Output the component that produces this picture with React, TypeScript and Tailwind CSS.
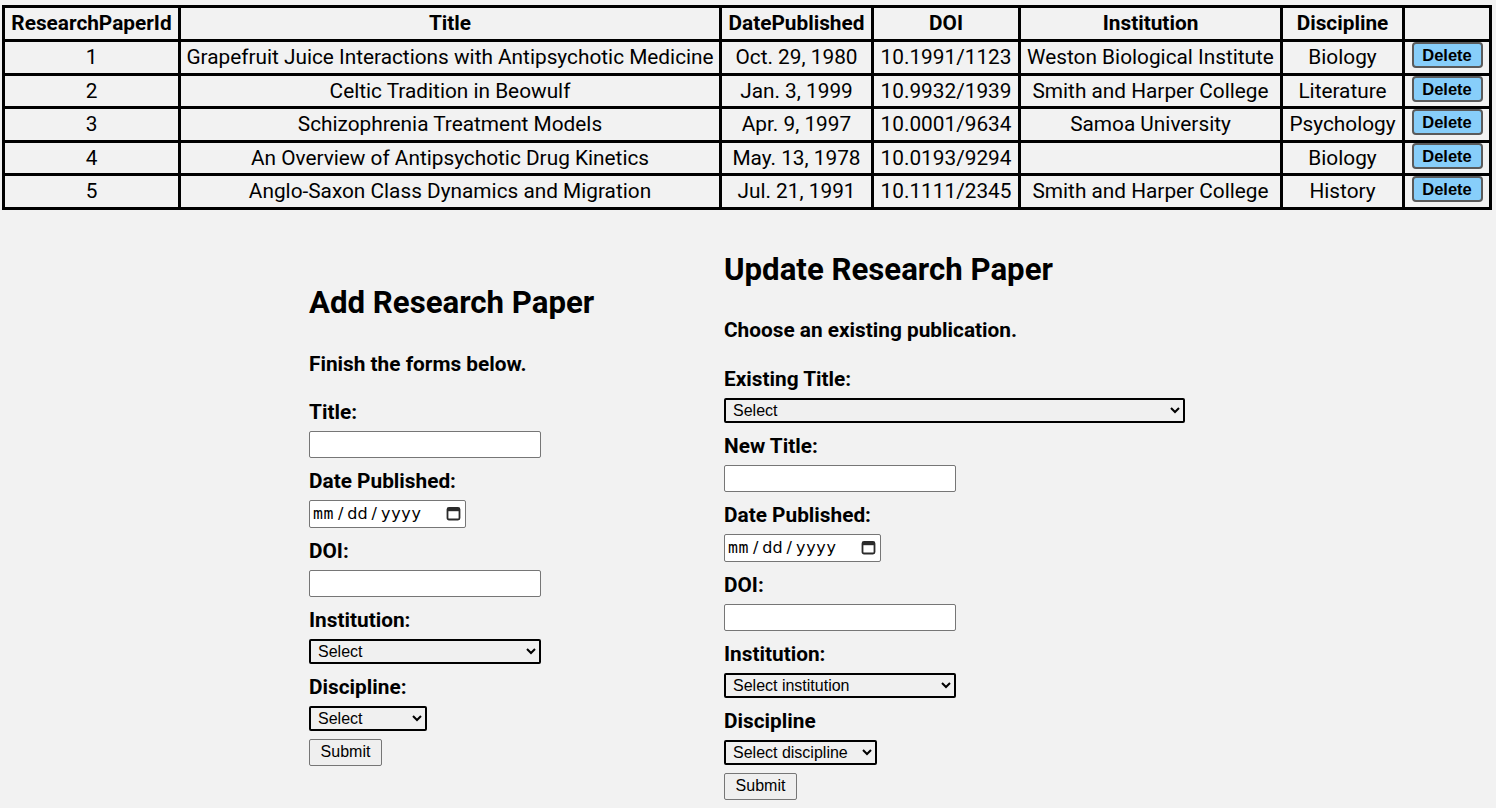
import React from "react";

const rows = [
  { id: 1, title: "Grapefruit Juice Interactions with Antipsychotic Medicine", date: "Oct. 29, 1980", doi: "10.1991/1123", inst: "Weston Biological Institute", disc: "Biology" },
  { id: 2, title: "Celtic Tradition in Beowulf", date: "Jan. 3, 1999", doi: "10.9932/1939", inst: "Smith and Harper College", disc: "Literature" },
  { id: 3, title: "Schizophrenia Treatment Models", date: "Apr. 9, 1997", doi: "10.0001/9634", inst: "Samoa University", disc: "Psychology" },
  { id: 4, title: "An Overview of Antipsychotic Drug Kinetics", date: "May. 13, 1978", doi: "10.0193/9294", inst: "", disc: "Biology" },
  { id: 5, title: "Anglo-Saxon Class Dynamics and Migration", date: "Jul. 21, 1991", doi: "10.1111/2345", inst: "Smith and Harper College", disc: "History" },
];

const th = "border-[3px] border-black px-[4px] py-[4px] leading-[23px] font-bold text-center";
const td = "border-[3px] border-black px-[4px] py-[4px] leading-[22.5px] text-center";

const labelCls = "block text-[20.8px] leading-[24px] font-bold mb-[7px]";
const textInput = "block h-[27px] bg-white border border-[#767676] rounded-[2px] mb-[11px] px-[2px]";
const selectCls = "block h-[25px] bg-[#f0f0f0] border-2 border-black rounded-[2px] font-['Liberation_Sans',sans-serif] text-[16px] leading-[19px] text-black pl-[3px]";
const submitCls = "block h-[27px] w-[73px] bg-[#efefef] border border-[#767676] rounded-[2px] font-['Liberation_Sans',sans-serif] text-[16px] text-black";

function CalendarIcon() {
  return (
    <svg width="15" height="15" viewBox="0 0 15 15" aria-hidden="true">
      <rect x="1.5" y="2" width="12" height="11.5" rx="1.5" fill="none" stroke="#2b2b2b" strokeWidth="1.8" />
      <rect x="1.5" y="2" width="12" height="3.2" fill="#2b2b2b" />
    </svg>
  );
}

function DateField() {
  return (
    <div
      role="textbox"
      tabIndex={0}
      className="flex items-center h-[28px] w-[157px] bg-white border border-[#767676] rounded-[2px] mb-[11px] pl-[3px] pr-[4px] text-black"
    >
      <div className="flex items-center gap-[4px] text-[16px] leading-[20px] font-['DejaVu_Sans',sans-serif]">
        <span className="font-['DejaVu_Sans_Mono',monospace] text-[16.5px] tracking-[0.5px]">mm</span>
        <span>/</span>
        <span>dd</span>
        <span>/</span>
        <span className="tracking-[0.7px]">yyyy</span>
      </div>
      <div className="ml-auto flex items-center">
        <CalendarIcon />
      </div>
    </div>
  );
}

export default function App() {
  return (
    <div className="min-h-[808px] bg-[#f2f2f2] font-['Roboto',sans-serif] text-[20.8px] text-black pt-[5px] pb-[9px]">
      <table className="ml-[2px] w-[1487px] table-fixed border-collapse border-[3px] border-black">
        <colgroup>
          <col className="w-[176px]" />
          <col className="w-[541px]" />
          <col className="w-[152px]" />
          <col className="w-[147px]" />
          <col className="w-[262px]" />
          <col className="w-[122px]" />
          <col className="w-[87px]" />
        </colgroup>
        <thead>
          <tr>
            <th className={th}>ResearchPaperId</th>
            <th className={th}>Title</th>
            <th className={th}>DatePublished</th>
            <th className={th}>DOI</th>
            <th className={th}>Institution</th>
            <th className={th}>Discipline</th>
            <th className={th}></th>
          </tr>
        </thead>
        <tbody>
          {rows.map((r) => (
            <tr key={r.id}>
              <td className={td}>{r.id}</td>
              <td className={td}>{r.title}</td>
              <td className={td}>{r.date}</td>
              <td className={td}>{r.doi}</td>
              <td className={td}>{r.inst}</td>
              <td className={td}>{r.disc}</td>
              <td className="border-[3px] border-black p-0 align-top text-center">
                <button className="block mx-auto h-[26px] w-[71px] bg-[#87cefa] border-2 border-[#5a5a5a] rounded-[4px] font-['Liberation_Sans',sans-serif] text-[16.5px] font-bold text-black leading-[20px]">
                  Delete
                </button>
              </td>
            </tr>
          ))}
        </tbody>
      </table>

      <div className="flex justify-center items-start mt-[41px] pr-[2px]">
        <div className="w-[415px] mt-[33px]">
          <h2 className="text-[31.2px] leading-[37px] font-bold mb-[31px]">Add Research Paper</h2>
          <p className="text-[20.8px] leading-[24px] font-bold mb-[24px]">Finish the forms below.</p>
          <label className={labelCls}>Title:</label>
          <input type="text" className={textInput + " w-[232px]"} />
          <label className={labelCls}>Date Published:</label>
          <DateField />
          <label className={labelCls}>DOI:</label>
          <input type="text" className={textInput + " w-[232px]"} />
          <label className={labelCls}>Institution:</label>
          <select className={selectCls + " w-[232px] mb-[11px]"} defaultValue="">
            <option value="">Select</option>
          </select>
          <label className={labelCls}>Discipline:</label>
          <select className={selectCls + " w-[118px] mb-[8px]"} defaultValue="">
            <option value="">Select</option>
          </select>
          <button className={submitCls}>Submit</button>
        </div>
        <div className="w-[461px]">
          <h2 className="text-[31.2px] leading-[37px] font-bold mb-[30px]">Update Research Paper</h2>
          <p className="text-[20.8px] leading-[24px] font-bold mb-[25px]">Choose an existing publication.</p>
          <label className={labelCls}>Existing Title:</label>
          <select className={selectCls + " w-[461px] mb-[11px]"} defaultValue="">
            <option value="">Select</option>
          </select>
          <label className={labelCls}>New Title:</label>
          <input type="text" className={textInput + " w-[232px]"} />
          <label className={labelCls}>Date Published:</label>
          <DateField />
          <label className={labelCls}>DOI:</label>
          <input type="text" className={textInput + " w-[232px]"} />
          <label className={labelCls}>Institution:</label>
          <select className={selectCls + " w-[232px] mb-[11px]"} defaultValue="">
            <option value="">Select institution</option>
          </select>
          <label className={labelCls}>Discipline</label>
          <select className={selectCls + " w-[153px] mb-[8px]"} defaultValue="">
            <option value="">Select discipline</option>
          </select>
          <button className={submitCls}>Submit</button>
        </div>
      </div>
    </div>
  );
}
